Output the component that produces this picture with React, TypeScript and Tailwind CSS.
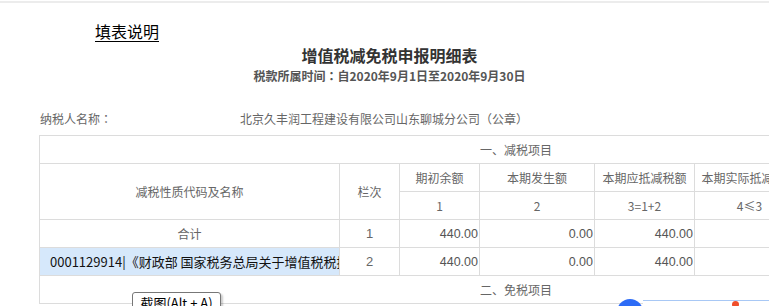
import React from 'react';

const cell = 'border border-[#dcdcdc] p-0 text-[12px] leading-[16px] text-[#666] text-center';
const num = 'border border-[#dcdcdc] p-0 pr-px text-right text-[12.5px] leading-[16px] text-[#555] font-["Liberation_Sans",sans-serif]';

const rows = [
  { name: '合计', line: '1', values: ['440.00', '0.00', '440.00', '', ''], selected: false },
  {
    name: '0001129914|《财政部 国家税务总局关于增值税税控系统专用设备和技术维护费用抵减增值税税额有关政策的通知》',
    line: '2',
    values: ['440.00', '0.00', '440.00', '', ''],
    selected: true,
  },
];

const Colon = () => <span className="font-['Noto_Sans_CJK_JP',sans-serif]">：</span>;

export default function App() {
  return (
    <div className="relative w-[769px] h-[306px] overflow-hidden bg-white font-['Noto_Sans_CJK_SC',sans-serif]">
      <div className="mt-px h-[2px] bg-[#ececec]" />

      <div className="pl-[95px] pt-[16px] h-[40px]">
        <span className="text-[16px] leading-[18px] text-black underline underline-offset-[3px]">填表说明</span>
      </div>

      <div className="text-center pl-[10px]">
        <h1 className="mt-px text-[16px] leading-[22px] font-bold text-[#333]">增值税减免税申报明细表</h1>
        <p className="mt-px text-[12px] leading-[18px] font-bold text-[#555]">
          税款所属时间<Colon />自2020年9月1日至2020年9月30日
        </p>
      </div>

      <div className="flex items-center h-[20px] mt-[24px] pl-[40px] text-[12px] text-[#666]">
        <span className="w-[200px]">纳税人名称<Colon /></span>
        <span>北京久丰润工程建设有限公司山东聊城分公司（公章）</span>
      </div>

      <table className="mt-[6px] ml-[39px] w-[953px] table-fixed border-collapse">
        <colgroup>
          <col className="w-[300px]" />
          <col className="w-[60px]" />
          <col className="w-[80px]" />
          <col className="w-[115px]" />
          <col className="w-[100px]" />
          <col className="w-[110px]" />
          <col className="w-[188px]" />
        </colgroup>
        <tbody>
          <tr className="h-[28px]">
            <td colSpan={7} className={cell}>一、减税项目</td>
          </tr>
          <tr className="h-[28px]">
            <td rowSpan={2} className={cell}>减税性质代码及名称</td>
            <td rowSpan={2} className={cell}>栏次</td>
            <td className={cell}>期初余额</td>
            <td className={cell}>本期发生额</td>
            <td className={cell}>本期应抵减税额</td>
            <td className={`${cell} whitespace-nowrap overflow-hidden`}>本期实际抵减税额</td>
            <td className={cell}>期末余额</td>
          </tr>
          <tr className="h-[28px]">
            <td className={cell}>1</td>
            <td className={cell}>2</td>
            <td className={cell}>3=1+2</td>
            <td className={cell}>4≤3</td>
            <td className={cell}>5=3-4</td>
          </tr>
          {rows.map((r) => (
            <tr key={r.line} className="h-[28px]">
              {r.selected ? (
                <td className="border border-[#dcdcdc] p-0 bg-[#d6e8fb] text-[13px] leading-[16px] text-[#111]">
                  <div className="w-[299px] pl-[10px] whitespace-nowrap overflow-hidden">{r.name}</div>
                </td>
              ) : (
                <td className={cell}>{r.name}</td>
              )}
              <td className={`${cell} font-["Liberation_Sans",sans-serif] text-[13px]`}>{r.line}</td>
              {r.values.map((v, i) => (
                <td key={i} className={num}>{v}</td>
              ))}
            </tr>
          ))}
          <tr className="h-[28px]">
            <td colSpan={7} className={cell}>二、免税项目</td>
          </tr>
        </tbody>
      </table>

      {/* screenshot tool tooltip */}
      <div className="absolute left-[132px] top-[292px] w-[89px] h-[24px] rounded-[3px] border border-[#777] bg-white text-[13px] leading-[20px] text-black text-center shadow-[2px_2px_2px_rgba(0,0,0,0.2)]">
        截图(Alt + A)
      </div>

      {/* floating widget peeking from bottom */}
      <div className="absolute left-[617px] top-[299px] w-[26px] h-[26px] rounded-full bg-[#2d6cf6]" />
      <div className="absolute left-[643px] top-[300px] w-[140px] h-[20px] border-t border-[#a8c8f5] bg-white" />
      <div className="absolute left-[732px] top-[301px] w-[7px] h-[7px] rounded-full bg-[#f04f2c]" />
    </div>
  );
}
